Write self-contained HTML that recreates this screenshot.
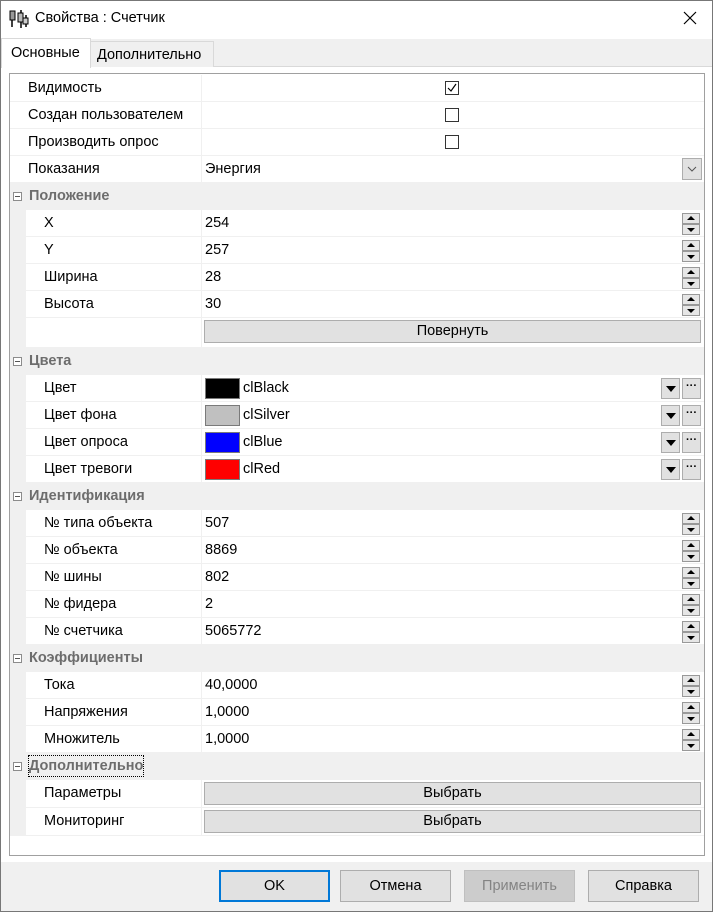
<!DOCTYPE html>
<html><head><meta charset="utf-8"><style>
*{margin:0;padding:0;box-sizing:border-box}
body{width:713px;height:912px;background:#f0f0f0;font-family:"Liberation Sans",sans-serif;font-size:14.5px;color:#000;position:relative;overflow:hidden}
.abs{position:absolute}
.win{left:0;top:0;width:713px;height:912px;border:1px solid #777;}
.title{left:1px;top:1px;width:711px;height:38px;background:#fff}
.panel{left:1px;top:66px;width:711px;height:796px;background:#fff;border-top:1px solid #d9d9d9}
.grid{left:9px;top:73px;width:696px;height:783px;border:1px solid #a0a0a0;background:#fff}
.row{position:absolute;left:10px;width:694px;height:27px;border-bottom:1px solid #f0f0f0;background:#fff;line-height:26px}
.row .l{position:absolute;left:18px}
.row.sub{left:26px;width:678px}
.row.sub .l{left:18px}
.row .v{position:absolute;left:191px;border-left:1px solid #f0f0f0;padding-left:3px;height:26px;top:0;width:500px}
.row.sub .v{left:175px;width:484px}
.cat{position:absolute;left:10px;width:694px;height:27px;background:#f0f0f0;line-height:27px;font-weight:bold;color:#6d6d6d}
.cat .m{position:absolute;left:3px;top:9px;width:9px;height:9px;border:1px solid #8c8c8c;background:#fff}
.cat .m:after{content:"";position:absolute;left:1px;top:3px;width:5px;height:1px;background:#555}
.cat span{position:absolute;left:19px}
.gut{position:absolute;left:10px;width:16px;background:#f0f0f0}
.spin{position:absolute;left:672px;width:18px;height:11px;border:1px solid #999;background:#e6e6e6}
.spin:after{content:"";position:absolute;left:4px;top:2px;border-left:4px solid transparent;border-right:4px solid transparent}
.up:after{border-bottom:4px solid #000}
.dn:after{border-top:4px solid #000;top:3px}
.btnc{position:absolute;height:23px;top:2px;background:#e1e1e1;border:1px solid #adadad;text-align:center;line-height:21px}
.sw{position:absolute;left:3px;top:3px;width:35px;height:21px;border:1px solid #7a7a7a}
.dd{position:absolute;left:651px;top:3px;width:19px;height:21px;border:1px solid #adadad;background:#e1e1e1}
.dd:after{content:"";position:absolute;left:4px;top:7px;border-left:5px solid transparent;border-right:5px solid transparent;border-top:6px solid #000}
.el{position:absolute;left:672px;top:3px;width:19px;height:21px;border:1px solid #adadad;background:#e1e1e1;font-size:11px;line-height:14px;text-align:center;font-weight:bold}
.cb{position:absolute;left:243px;top:6px;width:14px;height:14px;border:1px solid #333;background:#fff}
.b{position:absolute;top:870px;width:111px;height:32px;border:1px solid #adadad;background:#e1e1e1;text-align:center;line-height:30px}
</style></head><body>
<div class="abs win"></div>
<div class="abs title"></div>
<svg class="abs" style="left:9px;top:9px" width="20" height="20" viewBox="0 0 20 20"><rect x="1" y="2" width="5" height="9" fill="#999" stroke="#000"/><rect x="9" y="4" width="5" height="9" fill="#bbb" stroke="#000"/><path d="M3 11v7M12 1v3M12 13v6M17 6v12" stroke="#000" stroke-width="1.5"/><rect x="14" y="9" width="5" height="6" fill="#ccc" stroke="#000"/></svg>
<div class="abs" style="left:35px;top:10px;font-size:14.5px">Свойства : Счетчик</div>
<svg class="abs" style="left:683px;top:11px" width="14" height="14"><path d="M1 1L13 13M13 1L1 13" stroke="#000" stroke-width="1.2"/></svg>
<div class="abs" style="left:1px;top:39px;width:711px;height:28px;background:#f0f0f0"></div>
<div class="abs panel"></div>
<div class="abs" style="left:90px;top:41px;width:124px;height:26px;border:1px solid #d9d9d9;border-bottom:none;background:#f0f0f0;line-height:26px;padding-left:6px">Дополнительно</div>
<div class="abs" style="left:1px;top:38px;width:90px;height:30px;background:#fff;border:1px solid #d9d9d9;border-bottom:none;line-height:28px;padding-left:9px">Основные</div>
<div class="abs grid"></div>
<div class="gut" style="top:183px;height:653px"></div>

<div class="row" style="top:75px"><span class="l">Видимость</span><div class="v"><div class="cb"><svg width="12" height="12" style="position:absolute;left:0;top:0"><path d="M2 6l3 3l5-7" stroke="#000" fill="none" stroke-width="1.2"/></svg></div></div></div>
<div class="row" style="top:102px"><span class="l">Создан пользователем</span><div class="v"><div class="cb"></div></div></div>
<div class="row" style="top:129px"><span class="l">Производить опрос</span><div class="v"><div class="cb"></div></div></div>
<div class="row" style="top:156px"><span class="l">Показания</span><div class="v">Энергия<div style="position:absolute;left:480px;top:2px;width:20px;height:22px;border:1px solid #adadad;background:#e1e1e1"><svg width="18" height="20"><path d="M5 8l4 4l4-4" stroke="#555" fill="none"/></svg></div></div></div>

<div class="cat" style="top:183px"><div class="m"></div><span>Положение</span></div>
<div class="row sub" style="top:210px"><span class="l">X</span><div class="v">254</div><div class="spin up" style="left:656px;top:3px"></div><div class="spin dn" style="left:656px;top:14px"></div></div>
<div class="row sub" style="top:237px"><span class="l">Y</span><div class="v">257</div><div class="spin up" style="left:656px;top:3px"></div><div class="spin dn" style="left:656px;top:14px"></div></div>
<div class="row sub" style="top:264px"><span class="l">Ширина</span><div class="v">28</div><div class="spin up" style="left:656px;top:3px"></div><div class="spin dn" style="left:656px;top:14px"></div></div>
<div class="row sub" style="top:291px"><span class="l">Высота</span><div class="v">30</div><div class="spin up" style="left:656px;top:3px"></div><div class="spin dn" style="left:656px;top:14px"></div></div>
<div class="row sub" style="top:318px;height:30px"><div class="v" style="height:29px"></div><div class="btnc" style="left:178px;width:497px">Повернуть</div></div>

<div class="cat" style="top:348px"><div class="m"></div><span>Цвета</span></div>
<div class="row sub" style="top:375px"><span class="l">Цвет</span><div class="v"><div class="sw" style="background:#000"></div><span style="position:absolute;left:41px">clBlack</span><div class="dd" style="left:459px"></div><div class="el" style="left:480px">···</div></div></div>
<div class="row sub" style="top:402px"><span class="l">Цвет фона</span><div class="v"><div class="sw" style="background:#c0c0c0"></div><span style="position:absolute;left:41px">clSilver</span><div class="dd" style="left:459px"></div><div class="el" style="left:480px">···</div></div></div>
<div class="row sub" style="top:429px"><span class="l">Цвет опроса</span><div class="v"><div class="sw" style="background:#00f"></div><span style="position:absolute;left:41px">clBlue</span><div class="dd" style="left:459px"></div><div class="el" style="left:480px">···</div></div></div>
<div class="row sub" style="top:456px"><span class="l">Цвет тревоги</span><div class="v"><div class="sw" style="background:#f00"></div><span style="position:absolute;left:41px">clRed</span><div class="dd" style="left:459px"></div><div class="el" style="left:480px">···</div></div></div>

<div class="cat" style="top:483px"><div class="m"></div><span>Идентификация</span></div>
<div class="row sub" style="top:510px"><span class="l">№ типа объекта</span><div class="v">507</div><div class="spin up" style="left:656px;top:3px"></div><div class="spin dn" style="left:656px;top:14px"></div></div>
<div class="row sub" style="top:537px"><span class="l">№ объекта</span><div class="v">8869</div><div class="spin up" style="left:656px;top:3px"></div><div class="spin dn" style="left:656px;top:14px"></div></div>
<div class="row sub" style="top:564px"><span class="l">№ шины</span><div class="v">802</div><div class="spin up" style="left:656px;top:3px"></div><div class="spin dn" style="left:656px;top:14px"></div></div>
<div class="row sub" style="top:591px"><span class="l">№ фидера</span><div class="v">2</div><div class="spin up" style="left:656px;top:3px"></div><div class="spin dn" style="left:656px;top:14px"></div></div>
<div class="row sub" style="top:618px"><span class="l">№ счетчика</span><div class="v">5065772</div><div class="spin up" style="left:656px;top:3px"></div><div class="spin dn" style="left:656px;top:14px"></div></div>

<div class="cat" style="top:645px"><div class="m"></div><span>Коэффициенты</span></div>
<div class="row sub" style="top:672px"><span class="l">Тока</span><div class="v">40,0000</div><div class="spin up" style="left:656px;top:3px"></div><div class="spin dn" style="left:656px;top:14px"></div></div>
<div class="row sub" style="top:699px"><span class="l">Напряжения</span><div class="v">1,0000</div><div class="spin up" style="left:656px;top:3px"></div><div class="spin dn" style="left:656px;top:14px"></div></div>
<div class="row sub" style="top:726px"><span class="l">Множитель</span><div class="v">1,0000</div><div class="spin up" style="left:656px;top:3px"></div><div class="spin dn" style="left:656px;top:14px"></div></div>

<div class="cat" style="top:753px"><div class="m"></div><span style="outline:1px dotted #000;line-height:20px;top:3px">Дополнительно</span></div>
<div class="row sub" style="top:780px;height:28px"><span class="l">Параметры</span><div class="v" style="height:27px"></div><div class="btnc" style="left:178px;width:497px">Выбрать</div></div>
<div class="row sub" style="top:808px;height:28px"><span class="l">Мониторинг</span><div class="v" style="height:27px"></div><div class="btnc" style="left:178px;width:497px">Выбрать</div></div>

<div class="abs" style="left:1px;top:862px;width:711px;height:49px;background:#f0f0f0"></div>
<div class="b" style="left:219px;border:2px solid #0078d7;line-height:28px">OK</div>
<div class="b" style="left:340px">Отмена</div>
<div class="b" style="left:464px;background:#ccc;border-color:#bfbfbf;color:#838383">Применить</div>
<div class="b" style="left:588px">Справка</div>
</body></html>
